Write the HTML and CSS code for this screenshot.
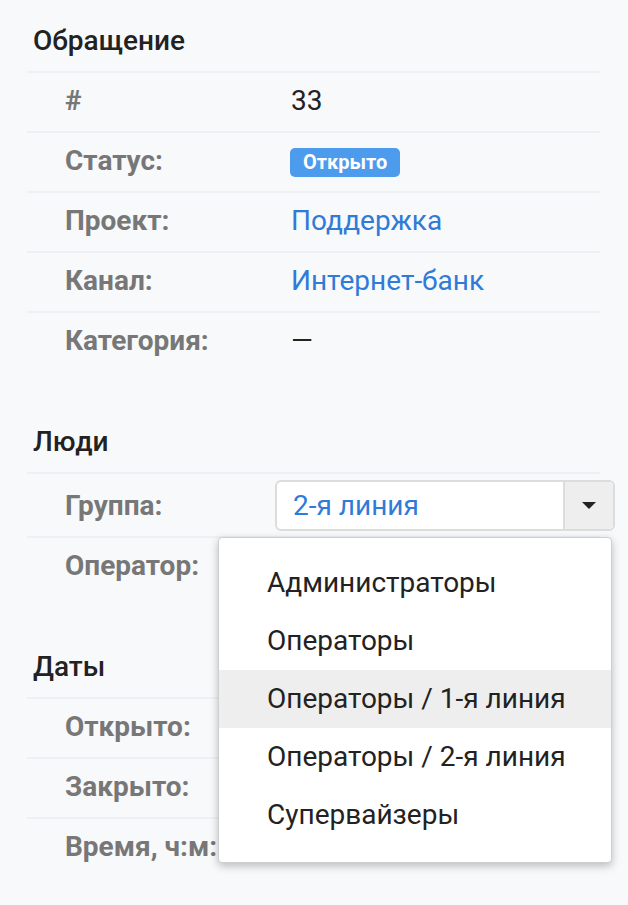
FILE: index.html
```html
<!DOCTYPE html>
<html lang="ru">
<head>
  <meta charset="UTF-8">
  <meta name="viewport" content="width=device-width, initial-scale=1.0">
  <title>Обращение #33</title>
  <link rel="stylesheet" href="styles.css">
</head>
<body>
  <div class="panel">
    <div class="section">
      <h2>Обращение</h2>
      <div class="row"><div class="label">#</div><div class="value">33</div></div>
      <div class="row"><div class="label">Статус:</div><div class="value"><span class="badge">Открыто</span></div></div>
      <div class="row"><div class="label">Проект:</div><div class="value"><a href="#">Поддержка</a></div></div>
      <div class="row"><div class="label">Канал:</div><div class="value"><a href="#">Интернет-банк</a></div></div>
      <div class="row"><div class="label">Категория:</div><div class="value">—</div></div>
    </div>

    <div class="section">
      <h2>Люди</h2>
      <div class="row row-select">
        <div class="label">Группа:</div>
        <div class="value">
          <div class="select">
            <span class="select-text">2-я линия</span>
            <span class="select-btn"><span class="caret"></span></span>
            <ul class="dropdown">
              <li>Администраторы</li>
              <li>Операторы</li>
              <li class="active">Операторы / 1-я линия</li>
              <li>Операторы / 2-я линия</li>
              <li>Супервайзеры</li>
            </ul>
          </div>
        </div>
      </div>
      <div class="row"><div class="label">Оператор:</div><div class="value"></div></div>
    </div>

    <div class="section">
      <h2>Даты</h2>
      <div class="row"><div class="label">Открыто:</div><div class="value"></div></div>
      <div class="row"><div class="label">Закрыто:</div><div class="value"></div></div>
      <div class="row"><div class="label">Время, ч:м:</div><div class="value"></div></div>
    </div>
  </div>
</body>
</html>
```

FILE: styles.css
```css
body { font-family: Roboto, "Noto Sans", sans-serif; margin: 0; padding: 0; background: #f8f9fb; color: #222; font-size: 28px; }
.panel { padding: 0 28px 0 27px; }
.section { margin-bottom: 30px; }
h2 {
  margin: 0;
  height: 71px;
  box-sizing: border-box;
  padding: 10px 0 0 6px;
  display: flex;
  align-items: center;
  font-size: 28px;
  font-weight: 500;
  color: #222;
}
.row {
  display: flex;
  align-items: center;
  min-height: 60px;
  padding-bottom: 4px;
  border-top: 2px solid #eef0f3;
  box-sizing: border-box;
}
.row-select { min-height: 64px; padding-bottom: 0; }
.label {
  width: 226px;
  padding-left: 38px;
  font-weight: 700;
  color: #777;
  white-space: nowrap;
}
.value { flex: 1; }
a { color: #2f7bd7; text-decoration: none; }
.badge {
  display: inline-block;
  background: #4d9bec;
  color: white;
  font-size: 20px;
  font-weight: 700;
  line-height: 23px;
  padding: 3px 13px;
  border-radius: 5px;
  margin-left: -1px;
}
.select {
  position: relative;
  display: flex;
  margin-left: -16px;
  margin-right: -15px;
  height: 51px;
  border: 2px solid #dcdcdc;
  border-radius: 6px;
  background: white;
  box-sizing: border-box;
}
.select-text { flex: 1; display: flex; align-items: center; padding-left: 16px; color: #2f7bd7; }
.select-btn {
  width: 48px;
  background: #eeeeee;
  border-left: 2px solid #dcdcdc;
  border-radius: 0 5px 5px 0;
  display: flex;
  align-items: center;
  justify-content: center;
}
.caret {
  width: 0;
  height: 0;
  border-left: 7px solid transparent;
  border-right: 7px solid transparent;
  border-top: 7px solid #222;
}
.dropdown {
  position: absolute;
  top: 55px;
  left: -59px;
  width: 394px;
  box-sizing: border-box;
  margin: 0;
  padding: 16px 0 18px;
  list-style: none;
  background: white;
  border: 1px solid #cfcfcf;
  border-radius: 4px;
  box-shadow: 0 3px 8px rgba(0,0,0,0.25);
  z-index: 10;
}
.dropdown li {
  height: 58px;
  display: flex;
  align-items: center;
  padding-left: 48px;
  color: #222;
}
.dropdown li.active { background: #eeeeee; }
```
